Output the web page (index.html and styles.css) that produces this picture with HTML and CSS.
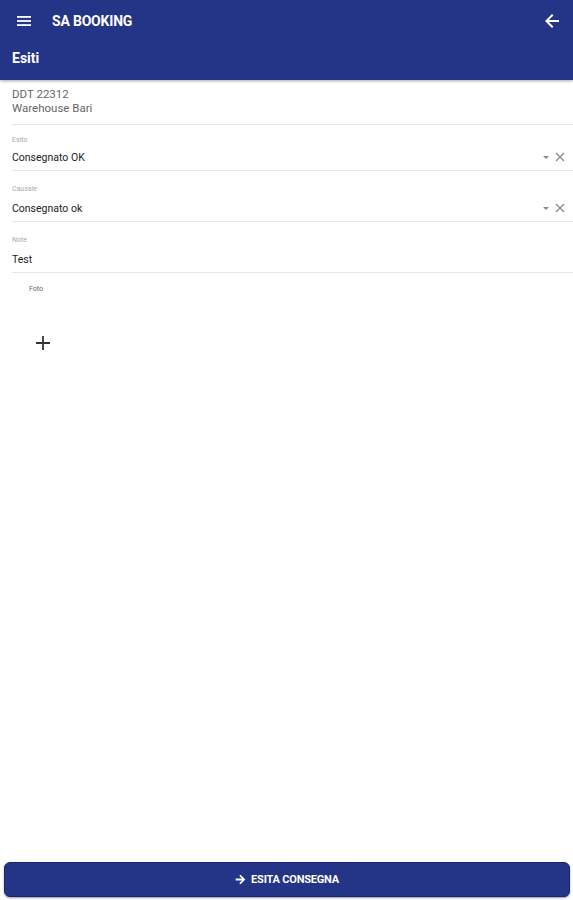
FILE: index.html
```html
<!DOCTYPE html>
<html lang="it">

<head>
    <meta charset="UTF-8">
    <meta name="viewport" content="width=device-width, initial-scale=1.0">
    <title>SA Booking - Esiti</title>
    <link rel="stylesheet" href="styles.css">
</head>

<body>
    <div class="app">
        <div class="header">
            <div class="toolbar">
                <svg class="menu-icon" width="16" height="12" viewBox="0 0 16 12">
                    <rect x="1" y="1" width="14" height="1.8" fill="#fff" />
                    <rect x="1" y="5.1" width="14" height="1.8" fill="#fff" />
                    <rect x="1" y="9.2" width="14" height="1.8" fill="#fff" />
                </svg>
                <span class="app-title">SA BOOKING</span>
                <svg class="back-icon" width="16" height="16" viewBox="0 0 16 16">
                    <path d="M15 7H4.8l4.6-4.6L8 1 1 8l7 7 1.4-1.4L4.8 9H15z" fill="#fff" />
                </svg>
            </div>
            <div class="page-title">Esiti</div>
        </div>

        <div class="content">
            <div class="info">
                <div>DDT 22312</div>
                <div>Warehouse Bari</div>
            </div>

            <div class="field field-first">
                <div class="label">Esito</div>
                <div class="row">
                    <span class="value">Consegnato OK</span>
                    <span class="actions">
                        <svg width="8" height="5" viewBox="0 0 8 5"><path d="M1 1h6L4 4z" fill="#8a8a8a" /></svg>
                        <svg width="10" height="10" viewBox="0 0 10 10"><path d="M1 1l8 8M9 1L1 9" stroke="#8a8a8a" stroke-width="1.3" /></svg>
                    </span>
                </div>
            </div>

            <div class="field">
                <div class="label">Causale</div>
                <div class="row">
                    <span class="value">Consegnato ok</span>
                    <span class="actions">
                        <svg width="8" height="5" viewBox="0 0 8 5"><path d="M1 1h6L4 4z" fill="#8a8a8a" /></svg>
                        <svg width="10" height="10" viewBox="0 0 10 10"><path d="M1 1l8 8M9 1L1 9" stroke="#8a8a8a" stroke-width="1.3" /></svg>
                    </span>
                </div>
            </div>

            <div class="field">
                <div class="label">Note</div>
                <div class="row">
                    <span class="value">Test</span>
                </div>
            </div>

            <div class="photo">
                <div class="photo-label">Foto</div>
                <svg class="add-icon" width="16" height="16" viewBox="0 0 16 16">
                    <path d="M8 1v14M1 8h14" stroke="#333" stroke-width="1.8" />
                </svg>
            </div>
        </div>

        <div class="footer">
            <button class="submit">
                <svg width="11" height="11" viewBox="0 0 16 16">
                    <path d="M1 6.5h9L6.2 2.7 8 1l7 7-7 7-1.8-1.7 3.8-3.8H1z" fill="#fff" />
                </svg>
                ESITA CONSEGNA
            </button>
        </div>
    </div>
</body>

</html>
```
FILE: styles.css
```css
* {
    margin: 0;
    padding: 0;
    box-sizing: border-box;
}

body {
    font-family: Roboto, "Liberation Sans", sans-serif;
    background: #fff;
    color: #333;
}

.app {
    height: 900px;
    display: flex;
    flex-direction: column;
}

/* barra superiore */
.header {
    background: #243487;
    color: #fff;
    height: 80px;
    box-shadow: 0 1px 3px rgba(0, 0, 0, 0.35);
}

.toolbar {
    display: flex;
    align-items: center;
    height: 41px;
    padding: 0 13px 0 16px;
}

.menu-icon {
    margin-right: 20px;
}

.app-title {
    font-size: 14px;
    font-weight: 700;
    letter-spacing: -0.2px;
    flex: 1;
}

.page-title {
    font-size: 14px;
    font-weight: 700;
    padding: 9px 12px 0;
}

/* contenuto */
.content {
    flex: 1;
    padding-left: 12px;
}

.info {
    font-size: 11.5px;
    color: #666;
    line-height: 14px;
    padding-top: 7px;
    height: 45px;
    border-bottom: 1px solid #e6e6e6;
}

.field {
    border-bottom: 1px solid #e6e6e6;
    height: 51px;
    padding-top: 14px;
}

.field-first {
    height: 46px;
    padding-top: 11px;
}

.label {
    font-size: 7px;
    color: #aaa;
    height: 10px;
}

.row {
    display: flex;
    align-items: center;
    justify-content: space-between;
    margin-top: 6px;
    height: 14px;
}

.field-first .row {
    margin-top: 4px;
}

.value {
    font-size: 10.5px;
    color: #222;
}

.actions {
    display: flex;
    align-items: center;
    gap: 5px;
    padding-right: 8px;
}

.photo {
    padding-left: 17px;
    padding-top: 12px;
}

.photo-label {
    font-size: 7px;
    color: #666;
}

.add-icon {
    display: block;
    margin-top: 42px;
    margin-left: 6px;
}

/* pulsante */
.footer {
    padding: 0 3px 3px 4px;
}

.submit {
    width: 100%;
    height: 35px;
    background: #243487;
    color: #fff;
    border: 1px solid #1a2670;
    border-radius: 6px;
    font-family: Roboto, "Liberation Sans", sans-serif;
    font-size: 11px;
    font-weight: 700;
    letter-spacing: -0.2px;
    display: flex;
    align-items: center;
    justify-content: center;
    gap: 5px;
    box-shadow: 0 1px 2px rgba(0, 0, 0, 0.4);
}
```
